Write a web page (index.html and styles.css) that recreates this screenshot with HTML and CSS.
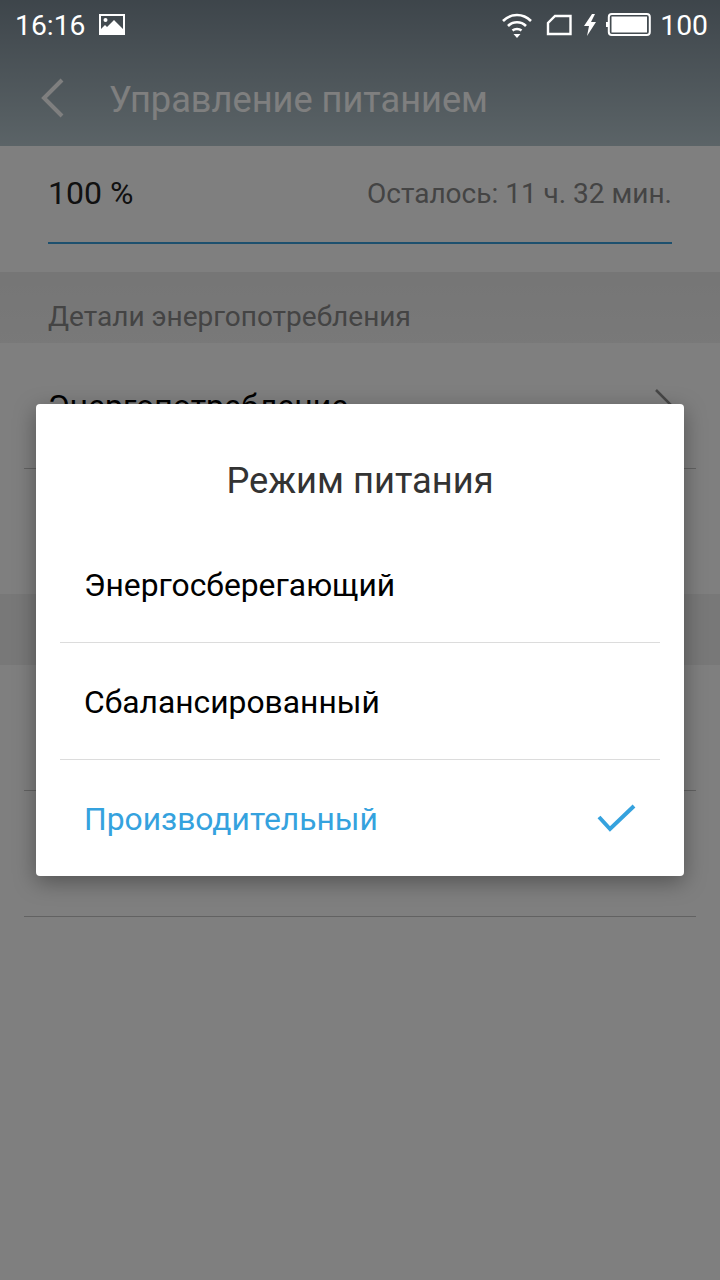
FILE: index.html
```html
<!DOCTYPE html>
<html lang="ru">
<head>
    <meta charset="UTF-8">
    <meta name="viewport" content="width=device-width, initial-scale=1.0">
    <title>Управление питанием</title>
    <link rel="stylesheet" href="styles.css">
</head>
<body>

<div class="screen">
    <div class="status-bar">
        <div class="status-left">
            <span class="clock">16:16</span>
            <svg class="pic-icon" width="26" height="22" viewBox="0 0 26 22">
                <path fill="#fff" fill-rule="evenodd" d="M0 0H26V21H0ZM2 2V15L6 11 8 13 15 6 24 15V2Z"/>
                <circle cx="6.500" cy="6" r="2" fill="#fff"/>
                <path d="M4 19 8 14 15 7 24 16V19Z" fill="#fff"/>
            </svg>
        </div>
        <div class="status-right">
            <svg width="32" height="26" viewBox="0 0 32 26">
                <g fill="none" stroke="#fff" stroke-width="2.600">
                    <path d="M2 9C10 1 22 1 30 9"/>
                    <path d="M7 14C12 9 20 9 25 14"/>
                    <path d="M11.500 18.500C14 16.500 18 16.500 20.500 18.500"/>
                </g>
                <path d="M12.500 22H19.500L16 26Z" fill="#fff"/>
            </svg>
            <svg class="sim-icon" width="26" height="22" viewBox="0 0 26 22">
                <path d="M9 2H24.500V20H2V9Z" fill="none" stroke="#fff" stroke-width="2.400"/>
            </svg>
            <svg class="bolt-icon" width="14" height="22" viewBox="0 0 14 22">
                <path d="M9 0 1 12H6L4 22 13 8H8L12 0Z" fill="#fff"/>
            </svg>
            <svg class="battery-icon" width="45" height="24" viewBox="0 0 45 24">
                <rect x="2.800" y="1" width="41" height="21" rx="3" fill="none" stroke="#fff" stroke-width="2"/>
                <rect x="5.500" y="3.500" width="35.500" height="16" fill="#fff"/>
                <rect x="0" y="9" width="2" height="5" fill="#fff"/>
            </svg>
            <span class="level">100</span>
        </div>
    </div>

    <div class="toolbar">
        <svg class="back-icon" width="24" height="40" viewBox="0 0 24 40">
            <path d="M22 2 4 20 22 38" fill="none" stroke="#fff" stroke-width="4"/>
        </svg>
        <span class="toolbar-title">Управление питанием</span>
    </div>

    <div class="battery-block">
        <div class="battery-info">
            <span class="percent">100 %</span>
            <span class="remaining">Осталось: 11 ч. 32 мин.</span>
        </div>
    </div>

    <div class="section-title">Детали энергопотребления</div>
    <div class="row">
        <span class="row-label">Энергопотребление</span>
        <svg class="chevron" width="20" height="36" viewBox="0 0 20 36">
            <path d="M2 2 18 18 2 34" fill="none" stroke="#8e8e8e" stroke-width="2.500"/>
        </svg>
    </div>
    <div class="row row-plain"></div>
    <div class="section-gap"></div>
    <div class="row"></div>
    <div class="row"></div>

    <div class="overlay">
        <div class="dialog">
            <h3 class="dialog-title">Режим питания</h3>
            <div class="option">Энергосберегающий</div>
            <div class="option">Сбалансированный</div>
            <div class="option option-active">
                Производительный
                <svg class="check-icon" width="40" height="30" viewBox="0 0 40 30">
                    <path d="M3 14 14 26 38 3" fill="none" stroke="#35a2de" stroke-width="4"/>
                </svg>
            </div>
        </div>
    </div>
</div>

</body>
</html>
```

FILE: styles.css
```css
* {
    box-sizing: border-box;
}
body {
    margin: 0;
    font-family: 'Roboto', sans-serif;
    background-color: #fff;
}
.screen {
    position: relative;
    width: 720px;
    height: 1280px;
    overflow: hidden;
    background-color: #fff;
}
.status-bar {
    position: relative;
    z-index: 3;
    height: 50px;
    padding: 0 12px 0 15px;
    display: flex;
    justify-content: space-between;
    align-items: center;
    color: #fff;
    font-size: 28.300px;
}
.status-left {
    display: flex;
    align-items: center;
    gap: 14px;
}
.status-right {
    display: flex;
    align-items: center;
}
.sim-icon {
    margin-left: 13px;
}
.bolt-icon {
    margin-left: 11px;
}
.battery-icon {
    margin-left: 9px;
}
.level {
    margin-left: 9px;
}
/* header colours sit under the dim layer */
.toolbar {
    margin-top: -50px;
    height: 146px;
    padding: 50px 0 0 40px;
    display: flex;
    align-items: center;
    background: linear-gradient(#7c8b96, #b7c8cf);
}
.toolbar-title {
    margin-left: 45px;
    padding-top: 3px;
    font-size: 36.200px;
    color: #fff;
}
.battery-block {
    height: 126px;
    padding: 0 48px;
}
.battery-info {
    height: 98px;
    padding-bottom: 2px;
    display: flex;
    justify-content: space-between;
    align-items: center;
    border-bottom: 2px solid #3aa0dc;
}
.percent {
    font-size: 32px;
    color: #222;
}
.remaining {
    font-size: 28px;
    color: #888;
}
.section-title {
    height: 71px;
    padding: 30px 48px 0;
    font-size: 28px;
    line-height: 30px;
    color: #888;
    background: linear-gradient(#ececec, #f2f2f2);
}
.row {
    position: relative;
    height: 126px;
    margin: 0 24px;
    padding: 0 24px;
    display: flex;
    justify-content: space-between;
    align-items: center;
    border-bottom: 1px solid #c4c4c4;
}
.row-plain {
    height: 125px;
    border-bottom: none;
}
.row-label {
    font-size: 32px;
    color: #000;
}
.chevron {
    flex: none;
    margin-right: -2px;
}
.section-gap {
    height: 71px;
    background-color: #f0f0f0;
}
.overlay {
    position: absolute;
    top: 0;
    left: 0;
    right: 0;
    bottom: 0;
    z-index: 2;
    display: flex;
    align-items: center;
    justify-content: center;
    background-color: rgba(0, 0, 0, 0.5);
}
.dialog {
    width: 648px;
    height: 472px;
    padding: 0 24px;
    background-color: #fff;
    border-radius: 4px;
    box-shadow: 0 6px 22px rgba(0, 0, 0, 0.35);
}
.dialog-title {
    margin: 0;
    height: 122px;
    padding-top: 55px;
    text-align: center;
    font-size: 36.300px;
    line-height: 44px;
    font-weight: 400;
    color: #333;
}
.option {
    height: 117px;
    padding: 1px 24px 0 24px;
    display: flex;
    justify-content: space-between;
    align-items: center;
    font-size: 31.800px;
    color: #000;
    border-bottom: 1px solid #dcdcdc;
}
.option-active {
    color: #35a2de;
    border-bottom: none;
}
.check-icon {
    margin-top: -3px;
}
```
